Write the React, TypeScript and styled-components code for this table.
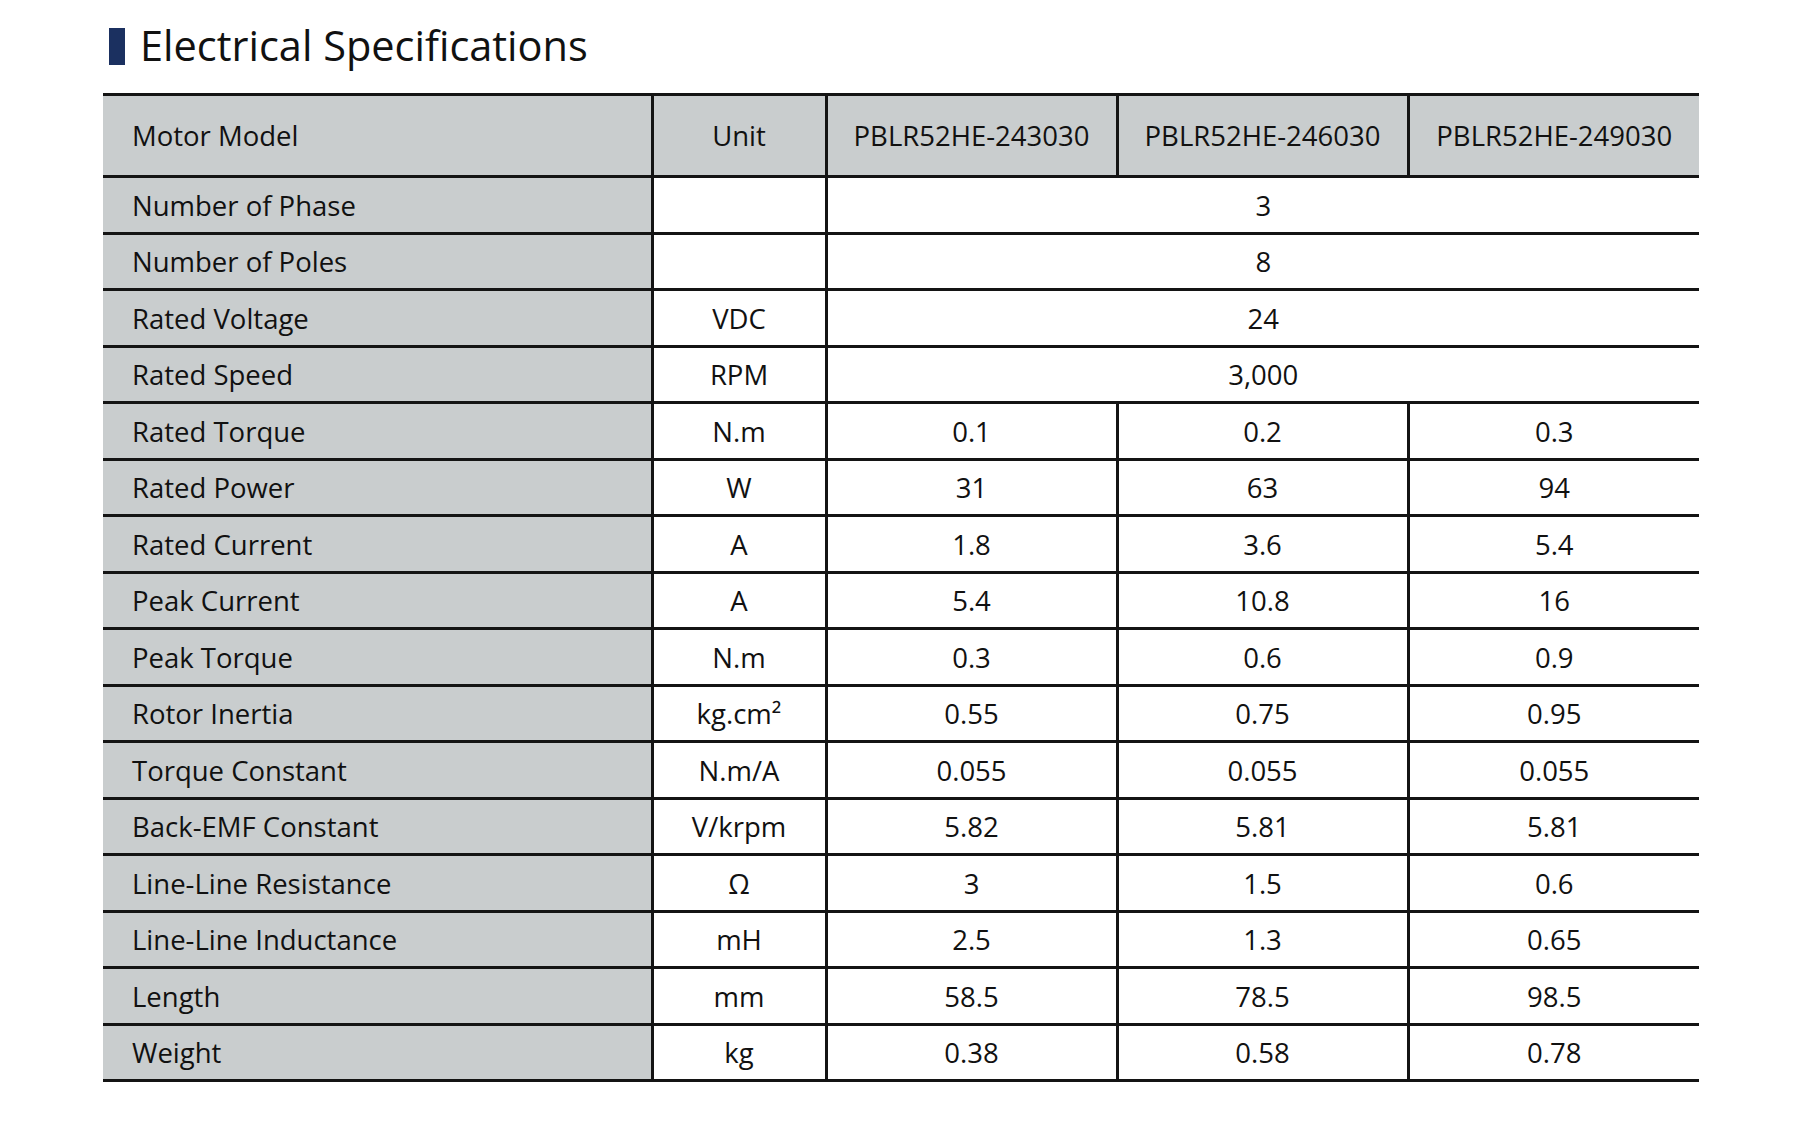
import React from "react";
import styled, { createGlobalStyle } from "styled-components";

const GlobalStyle = createGlobalStyle`
  html, body {
    margin: 0;
    padding: 0;
    background: #ffffff;
  }
  body {
    font-family: "Open Sans", "Noto Sans", "Liberation Sans", sans-serif;
    color: #111111;
  }
`;

const Page = styled.div`
  width: 1800px;
  height: 1129px;
  box-sizing: border-box;
  padding: 18px 0 0 103px;
  background: #ffffff;
`;

const TitleRow = styled.div`
  display: flex;
  align-items: center;
  gap: 15px;
  height: 56px;
  padding-left: 6px;
  margin-bottom: 19px;
`;

const TitleBar = styled.div`
  width: 16px;
  height: 37px;
  background: #1b3060;
`;

const Title = styled.h1`
  margin: 0;
  font-family: "Open Sans", "Noto Sans", sans-serif;
  font-weight: 400;
  font-size: 41.5px;
  line-height: 1;
  color: #111111;
`;

const Table = styled.table`
  border-collapse: collapse;
  table-layout: fixed;
  width: 1596px;
  border-top: 3px solid #141414;
  border-bottom: 3px solid #141414;
`;

const HeadRow = styled.tr`
  height: 82px;
`;

const Row = styled.tr`
  height: 56.5px;
`;

const Cell = styled.td<{ $grey?: boolean; $left?: boolean }>`
  padding: 2px 0 0 ${(p) => (p.$left ? "29px" : "0")};
  text-align: ${(p) => (p.$left ? "left" : "center")};
  vertical-align: middle;
  background: ${(p) => (p.$grey ? "#c9cdce" : "#ffffff")};
  border: 3px solid #141414;
  font-family: "Open Sans", "Noto Sans", sans-serif;
  font-size: 27.5px;
  line-height: 36px;
  font-weight: 400;
  color: #111111;
  white-space: nowrap;
  overflow: hidden;

  &:first-child {
    border-left: none;
  }
  &:last-child {
    border-right: none;
  }
`;

const HeadCell = styled(Cell).attrs({ as: "th" })`
  padding-top: 0;
  padding-bottom: 0;
`;

type Spec = { label: string; unit: string; values: string[] };

const models = ["PBLR52HE-243030", "PBLR52HE-246030", "PBLR52HE-249030"];

const specs: Spec[] = [
  { label: "Number of Phase", unit: "", values: ["3"] },
  { label: "Number of Poles", unit: "", values: ["8"] },
  { label: "Rated Voltage", unit: "VDC", values: ["24"] },
  { label: "Rated Speed", unit: "RPM", values: ["3,000"] },
  { label: "Rated Torque", unit: "N.m", values: ["0.1", "0.2", "0.3"] },
  { label: "Rated Power", unit: "W", values: ["31", "63", "94"] },
  { label: "Rated Current", unit: "A", values: ["1.8", "3.6", "5.4"] },
  { label: "Peak Current", unit: "A", values: ["5.4", "10.8", "16"] },
  { label: "Peak Torque", unit: "N.m", values: ["0.3", "0.6", "0.9"] },
  { label: "Rotor Inertia", unit: "kg.cm²", values: ["0.55", "0.75", "0.95"] },
  { label: "Torque Constant", unit: "N.m/A", values: ["0.055", "0.055", "0.055"] },
  { label: "Back-EMF Constant", unit: "V/krpm", values: ["5.82", "5.81", "5.81"] },
  { label: "Line-Line Resistance", unit: "Ω", values: ["3", "1.5", "0.6"] },
  { label: "Line-Line Inductance", unit: "mH", values: ["2.5", "1.3", "0.65"] },
  { label: "Length", unit: "mm", values: ["58.5", "78.5", "98.5"] },
  { label: "Weight", unit: "kg", values: ["0.38", "0.58", "0.78"] },
];

export default function App() {
  return (
    <>
      <GlobalStyle />
      <Page>
        <TitleRow>
          <TitleBar />
          <Title>Electrical Specifications</Title>
        </TitleRow>
        <Table>
          <colgroup>
            <col style={{ width: 549 }} />
            <col style={{ width: 174 }} />
            <col style={{ width: 291 }} />
            <col style={{ width: 291 }} />
            <col style={{ width: 291 }} />
          </colgroup>
          <thead>
            <HeadRow>
              <HeadCell $grey $left>
                Motor Model
              </HeadCell>
              <HeadCell $grey>Unit</HeadCell>
              {models.map((m) => (
                <HeadCell key={m} $grey>
                  {m}
                </HeadCell>
              ))}
            </HeadRow>
          </thead>
          <tbody>
            {specs.map((s) => (
              <Row key={s.label}>
                <Cell $grey $left>
                  {s.label}
                </Cell>
                <Cell>{s.unit}</Cell>
                {s.values.length === 1 ? (
                  <Cell colSpan={3}>{s.values[0]}</Cell>
                ) : (
                  s.values.map((v, i) => <Cell key={i}>{v}</Cell>)
                )}
              </Row>
            ))}
          </tbody>
        </Table>
      </Page>
    </>
  );
}
